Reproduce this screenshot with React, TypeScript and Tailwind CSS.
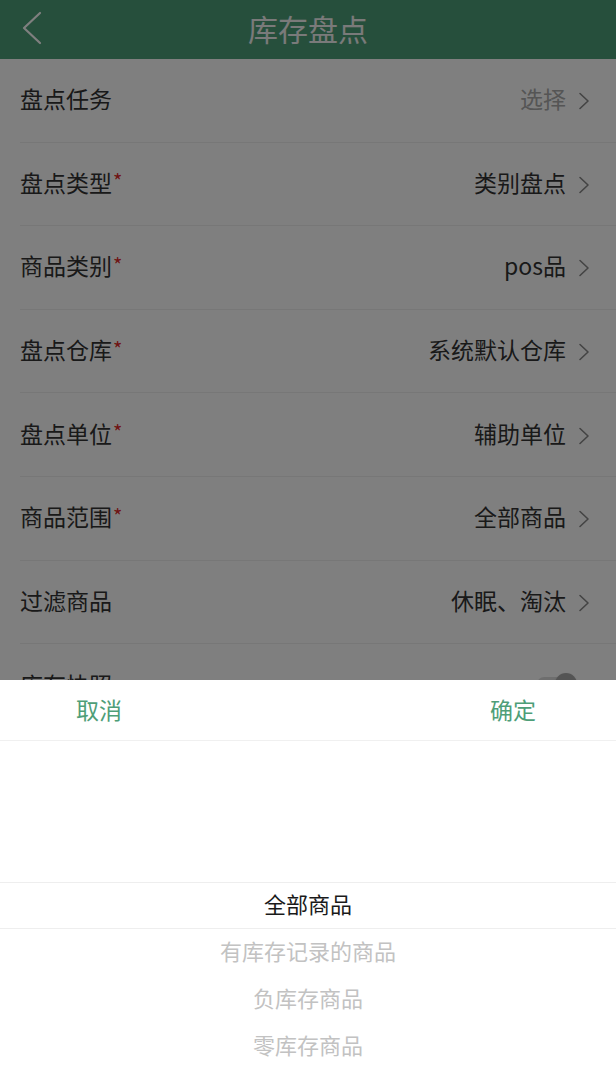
import React from "react";

const rows: { label: string; value: string; required: boolean; muted?: boolean }[] = [
  { label: "盘点任务", value: "选择", required: false, muted: true },
  { label: "盘点类型", value: "类别盘点", required: true },
  { label: "商品类别", value: "pos品", required: true },
  { label: "盘点仓库", value: "系统默认仓库", required: true },
  { label: "盘点单位", value: "辅助单位", required: true },
  { label: "商品范围", value: "全部商品", required: true },
  { label: "过滤商品", value: "休眠、淘汰", required: false },
];

const options = ["全部商品", "有库存记录的商品", "负库存商品", "零库存商品"];

function ChevronRight() {
  return (
    <svg width="12" height="18" viewBox="0 0 12 18" className="ml-3 mt-[5px] shrink-0">
      <path d="M2 1.5 L10 9 L2 16.5" fill="none" stroke="#888" strokeWidth="1.6" strokeLinecap="round" strokeLinejoin="round" />
    </svg>
  );
}

export default function App() {
  return (
    <div
      className="relative h-[1067px] w-[616px] overflow-hidden bg-white"
      style={{ fontFamily: '"Noto Sans CJK SC", "Noto Sans", sans-serif' }}
    >
      {/* header */}
      <div className="relative flex h-[59px] items-center justify-center bg-[#4c9e78] pb-[4px]">
        <svg width="24" height="36" viewBox="0 0 24 36" className="absolute left-[20px] top-[11px]">
          <path d="M20 2 L4 17 L20 32" fill="none" stroke="#ffffff" strokeWidth="2.2" strokeLinecap="round" strokeLinejoin="round" />
        </svg>
        <span className="text-[30px] leading-none text-[#f4f4f4]">库存盘点</span>
      </div>

      {/* form rows */}
      <div className="flex flex-col">
        {rows.map((r) => (
          <div
            key={r.label}
            className="ml-5 flex h-[83.6px] items-center justify-between border-b border-[#eeeeee] pb-[3px] pr-[26px]"
          >
            <div className="flex items-center">
              <span className="text-[23px] leading-none text-[#333]">{r.label}</span>
              {r.required && (
                <span className="mb-[2px] ml-[1px] text-[20px] leading-none text-[#e02828]">*</span>
              )}
            </div>
            <div className="flex items-center">
              <span className={`text-[23px] leading-none ${r.muted ? "text-[#aaaaaa]" : "text-[#333]"}`}>
                {r.value}
              </span>
              <ChevronRight />
            </div>
          </div>
        ))}
        <div className="ml-5 flex h-[83.6px] items-center justify-between pb-[3px] pr-[39px]">
          <span className="text-[23px] leading-none text-[#333]">库存快照</span>
          <div className="relative flex h-[22px] w-[40px] items-center">
            <div className="h-[14px] w-full rounded-full bg-[#dddddd]" />
            <div className="absolute right-0 top-0 h-[22px] w-[22px] rounded-full bg-[#a8a8a8] shadow" />
          </div>
        </div>
      </div>

      {/* overlay */}
      <div className="absolute inset-0 bg-black/50" />

      {/* bottom sheet picker */}
      <div className="absolute bottom-0 left-0 right-0 flex h-[387px] flex-col bg-white">
        <div className="flex h-[61px] shrink-0 items-center justify-between border-b border-[#f0f0f0] pb-[2px] pl-[76px] pr-[80px]">
          <span className="text-[23px] leading-none text-[#4e9e78]">取消</span>
          <span className="text-[23px] leading-none text-[#4e9e78]">确定</span>
        </div>
        <div className="flex flex-col">
          <div className="h-[141px] shrink-0" />
          {options.map((o, i) => (
            <div
              key={o}
              className={`flex h-[47px] shrink-0 items-center justify-center pb-[6px] ${
                i === 0 ? "border-y border-[#eeeeee]" : ""
              }`}
            >
              <span className={`text-[22px] leading-none ${i === 0 ? "text-[#1a1a1a]" : "text-[#c2c2c2]"}`}>{o}</span>
            </div>
          ))}
        </div>
      </div>
    </div>
  );
}
